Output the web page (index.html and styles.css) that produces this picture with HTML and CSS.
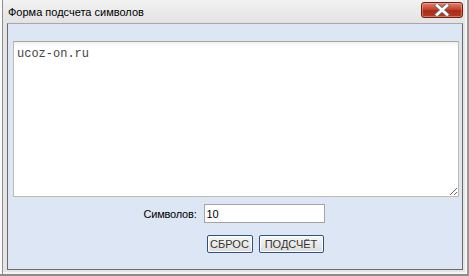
FILE: index.html
```html
<!DOCTYPE html>
<html lang="ru">
<head>
  <meta charset="UTF-8" />
  <title>Форма подсчета символов</title>
<link rel="stylesheet" href="styles.css">
</head>
<body>

  <div class="window">
    <!-- Заголовок окна -->
    <div class="titlebar">
      <span class="title">Форма подсчета символов</span>
      <button class="close" type="button" aria-label="Закрыть">
        <svg width="18" height="12" viewBox="0 0 18 12">
          <path d="M4 1.5 L14 10.5 M14 1.5 L4 10.5" stroke="#6d6d6d" stroke-width="4.4" stroke-linecap="square" />
          <path d="M4 1.5 L14 10.5 M14 1.5 L4 10.5" stroke="#fff" stroke-width="2.6" stroke-linecap="square" />
        </svg>
      </button>
    </div>

    <!-- Форма -->
    <form class="panel" id="countForm">
      <textarea id="text">ucoz-on.ru</textarea>
      <div class="fields">
        <label for="count">Символов:</label>
        <input type="text" id="count" value="10" readonly />
        <div class="buttons">
          <button type="reset" class="btn btn-reset">СБРОС</button>
          <button type="submit" class="btn btn-count">ПОДСЧЁТ</button>
        </div>
      </div>
    </form>
  </div>

  <script>
    const form = document.getElementById('countForm');
    const text = document.getElementById('text');
    const count = document.getElementById('count');

    // Подсчёт символов
    form.addEventListener('submit', e => {
      e.preventDefault();
      count.value = text.value.length;
    });

    form.addEventListener('reset', () => {
      setTimeout(() => { count.value = ''; }, 0);
    });
  </script>

</body>
</html>
```

FILE: styles.css
```css
body {
  margin: 0;
  font-family: 'Liberation Sans', Arial, sans-serif;
  font-size: 11px;
  color: #000;
}

/* Рамка окна */
.window {
  width: 469px;
  height: 276px;
  box-sizing: border-box;
  background: #e5e5e5;
  border-right: 2px solid #9a9a9a;
  border-bottom: 2px solid #8c8c8c;
  box-shadow: inset 2px 0 0 #fafafa, inset 3px 0 0 #8e8e8e, inset -2px -2px 0 #f4f4f4;
  padding: 0 4px 4px 7px;
}

.titlebar {
  height: 23px;
  display: flex;
  align-items: flex-start;
  justify-content: space-between;
  background: linear-gradient(#f2f2f2, #e3e3e3);
  margin-left: -4px;
  padding-left: 5px;
}

.title {
  margin-top: 6px;
  font-size: 11px;
}

.close {
  margin-top: 2px;
  width: 42px;
  height: 16px;
  padding: 0;
  border: 1px solid #6b2014;
  border-radius: 3px;
  background: linear-gradient(#e0826f, #c6432c 45%, #a92b16 55%, #b73a22);
  box-shadow: inset 0 0 0 1px rgba(255, 190, 170, 0.45);
  display: flex;
  align-items: center;
  justify-content: center;
}

/* Панель с формой */
.panel {
  height: 247px;
  box-sizing: border-box;
  background: #dde6f5;
  border: 1px solid #6a6a6a;
  border-top-color: #a8a8a8;
  padding: 17px 4px 0 5px;
}

textarea {
  display: block;
  width: 446px;
  height: 156px;
  box-sizing: border-box;
  margin: 0;
  border: 1px solid #bcbcab;
  border-top-color: #a9a99a;
  background: linear-gradient(#efefef, #fff 4px);
  padding: 5px 3px;
  font-family: 'Liberation Mono', 'Courier New', monospace;
  font-size: 12px;
  color: #444;
  resize: both;
}

.fields {
  display: grid;
  grid-template-columns: auto 121px;
  column-gap: 7px;
  row-gap: 12px;
  align-items: center;
  justify-content: center;
  margin-top: 7px;
  padding-right: 3px;
}

label {
  text-align: right;
  font-size: 11px;
  letter-spacing: -0.2px;
}

input[type="text"] {
  width: 121px;
  height: 19px;
  box-sizing: border-box;
  border: 1px solid #a4a4a4;
  background: #fff;
  padding: 1px 2px;
  font-family: inherit;
  font-size: 11px;
}

.buttons {
  grid-column: 2;
  display: flex;
  justify-content: flex-end;
  gap: 6px;
  padding-right: 1px;
}

.btn {
  height: 18px;
  padding: 0;
  border: 1px solid #2f4f80;
  border-radius: 2px;
  background: linear-gradient(#f7f7f7, #dcdcdc);
  box-shadow: inset 0 0 0 1px #fff;
  font-family: inherit;
  font-size: 11px;
  color: #333;
  cursor: pointer;
}

.btn-reset {
  width: 46px;
}

.btn-count {
  width: 65px;
}

.btn:hover {
  background: linear-gradient(#fff, #e6e6e6);
}
```
